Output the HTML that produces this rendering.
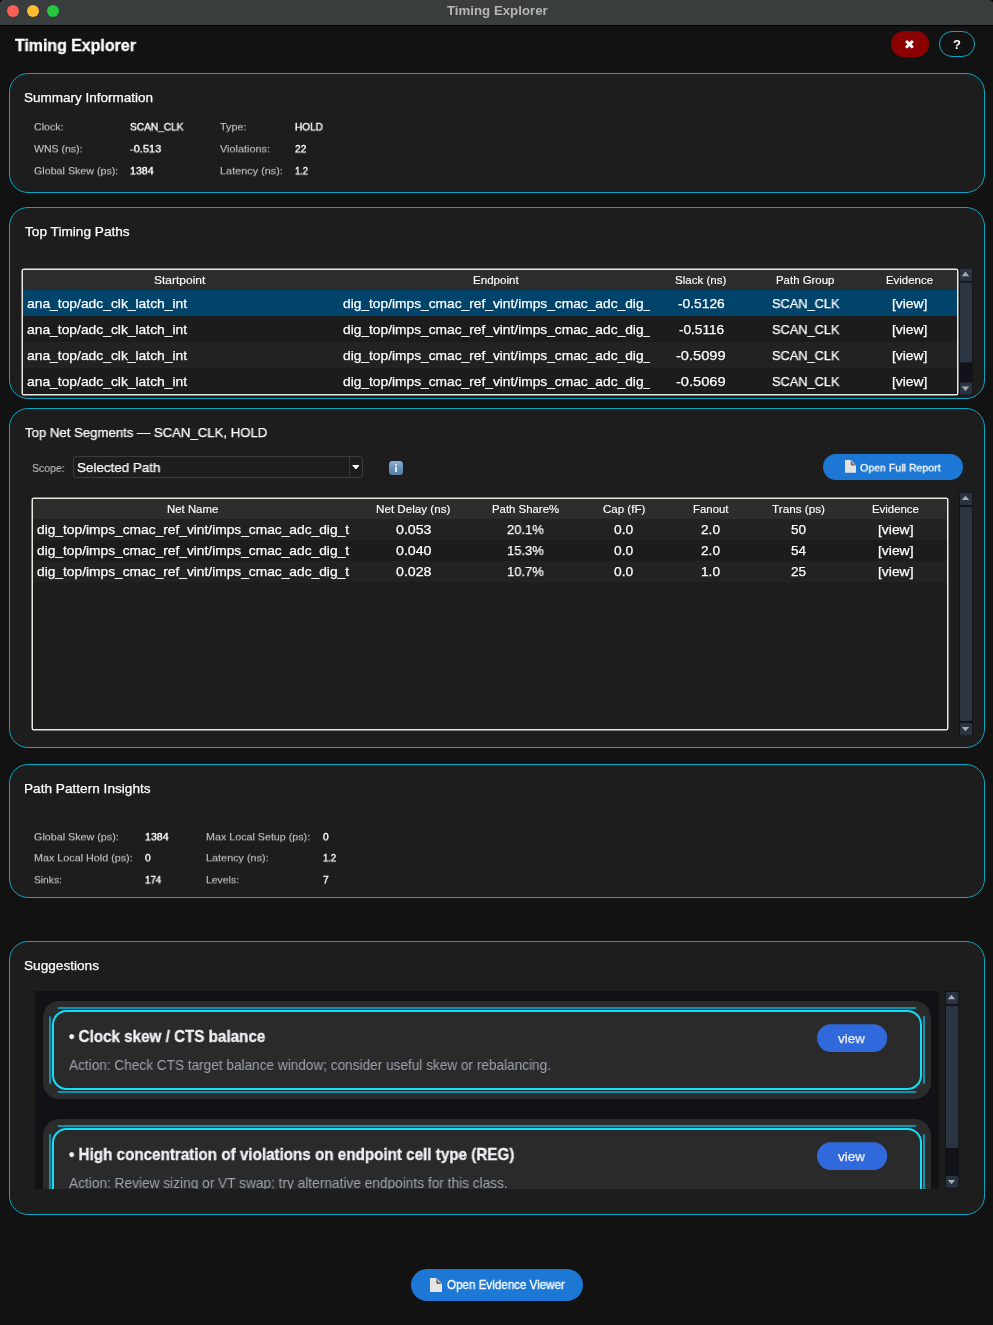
<!DOCTYPE html>
<html><head><meta charset="utf-8"><title>Timing Explorer</title>
<style>
*{box-sizing:border-box;margin:0;padding:0}
html,body{width:993px;height:1325px;overflow:hidden;background:#000}
body{position:relative;font-family:"Liberation Sans",sans-serif;color:#fff}
#win{position:absolute;left:0;top:0;width:993px;height:1325px;background:#121212;border-radius:4px 4px 0 0;overflow:hidden}
.abs{position:absolute}
.t{position:absolute;white-space:nowrap;line-height:1;will-change:transform;transform-origin:0 0}
#titlebar{position:absolute;left:0;top:0;width:993px;height:25px;background:#3a3d3e}
#tline{position:absolute;left:0;top:25px;width:993px;height:1px;background:#000}
.dot{position:absolute;top:4.8px;width:12.3px;height:12.3px;border-radius:50%}
.panel{position:absolute;left:9px;width:976px;background:#1d1d1d;border:1px solid #0aa7c3;border-radius:19px}
.tbl{position:absolute;background:#1d1d1d;overflow:hidden}
.r{position:absolute;left:0;right:0}
.pill{position:absolute;border-radius:16px}
</style></head><body><div id="win">
<div id="titlebar">
 <div class="dot" style="left:6.9px;background:#fe5f57;box-shadow:0 0 0 0.5px #2c3a3a"></div>
 <div class="dot" style="left:26.9px;background:#febc2e;box-shadow:0 0 0 0.5px #2c3240"></div>
 <div class="dot" style="left:46.9px;background:#28c840;box-shadow:0 0 0 0.5px #2c3a3a"></div>
</div>
<div id="tline"></div>
<!-- top-right buttons -->
<div class="pill" style="left:891px;top:31px;width:38px;height:26px;background:#8b0000"></div>
<div class="pill" style="left:939px;top:31px;width:36px;height:26px;border:1px solid #0aa7c3"></div>
<div class="t" style="left:903.8px;top:37.5px;font-size:13px;font-family:'DejaVu Sans',sans-serif;color:#fff">✖</div>

<!-- PANELS -->
<div class="panel" style="top:73px;height:120px"></div>
<div class="panel" style="top:207px;height:192px"></div>
<div class="panel" style="top:408px;height:340px"></div>
<div class="panel" style="top:764px;height:134px"></div>
<div class="panel" style="top:941px;height:274px"></div>

<!-- TABLE 1 -->
<svg class="abs" style="left:20px;top:267px" width="940" height="130" viewBox="20 267 940 130"><rect x="22.25" y="269.25" width="935.5" height="125.5" rx="1.6" fill="#1c1c1c" stroke="#ebe8e2" stroke-width="1.5"/></svg>
<div class="tbl" style="left:23px;top:270px;width:934px;height:124px">
 <div class="r" style="top:0;height:20px;background:#2d2d2d"></div>
 <div class="r" style="top:20px;height:26px;background:#01446b"></div>
 <div class="r" style="top:46px;height:26px;background:#1c1c1c"></div>
 <div class="r" style="top:72px;height:26px;background:#222222"></div>
 <div class="r" style="top:98px;height:26px;background:#1c1c1c"></div>
</div>
<svg class="abs" style="left:959px;top:268.3px" width="14" height="127.4" viewBox="0 0 14 127.4"><rect x="0.2" y="0" width="13.6" height="127.4" fill="#111318"/><rect x="1" y="0.60" width="12.1" height="12.30" rx="0.8" fill="#2a3340"/><rect x="1" y="14.40" width="12.1" height="80.20" rx="0.8" fill="#2b3542"/><rect x="1" y="114.60" width="12.1" height="12.00" rx="0.8" fill="#2a3340"/><path d="M2.70 8.20L6.45 3.60L10.20 8.20Z" fill="#a5acb5"/><path d="M2.70 118.50L6.45 123.10L10.20 118.50Z" fill="#a5acb5"/></svg>

<!-- PANEL 3 widgets -->
<div class="abs" style="left:73px;top:456px;width:290px;height:22px;border:1px solid #3c3c3c;border-radius:3px;background:#1d1d1d"></div>
<div class="abs" style="left:348.5px;top:456px;width:1.8px;height:22px;background:#383838"></div>
<svg class="abs" style="left:351.6px;top:464.7px" width="7.8" height="4.6" viewBox="0 0 7.8 4.6"><path d="M0 0H7.8L3.9 4.6Z" fill="#fff"/></svg>
<div class="abs" style="left:389px;top:461px;width:14px;height:14px;border-radius:3.5px;background:linear-gradient(#8db4d8,#6a94bd 45%,#577fa8);"></div>
<div class="abs" style="left:395.3px;top:464px;width:1.5px;height:1.5px;background:#e6edf5;border-radius:.4px"></div>
<div class="abs" style="left:395.3px;top:466.6px;width:1.5px;height:5.2px;background:#e6edf5;border-radius:.3px"></div>
<div class="pill" style="left:823px;top:454px;width:140px;height:26px;background:#1c78d4;border-radius:13px"></div>
<svg class="abs" style="left:845px;top:460.2px" width="11" height="12.8" viewBox="0 0 12 14"><path d="M0 0H6.3L12 6V14H0Z" fill="#e4e4e4"/><path d="M6.3 0L12 6H7.2Q6.3 6 6.3 5Z" fill="#6a6a6a"/><path d="M6.3 0L12 6L8.4 3.4Z" fill="#f6f6f6"/></svg>

<!-- TABLE 2 -->
<svg class="abs" style="left:30px;top:496px" width="920" height="236" viewBox="30 496 920 236"><rect x="32.25" y="498.25" width="915.5" height="231.5" rx="1.6" fill="#1d1d1d" stroke="#ebe8e2" stroke-width="1.5"/></svg>
<div class="tbl" style="left:33px;top:499px;width:914px;height:230px">
 <div class="r" style="top:0;height:20px;background:#2d2d2d"></div>
 <div class="r" style="top:20px;height:21px;background:#222222"></div>
 <div class="r" style="top:41px;height:21px;background:#1c1c1c"></div>
 <div class="r" style="top:62px;height:21px;background:#222222"></div>
</div>
<svg class="abs" style="left:959px;top:492.0px" width="14" height="244.3" viewBox="0 0 14 244.3"><rect x="0.2" y="0" width="13.6" height="244.3" fill="#111318"/><rect x="1" y="0.80" width="12.1" height="12.10" rx="0.8" fill="#2a3340"/><rect x="1" y="14.90" width="12.1" height="214.00" rx="0.8" fill="#2b3542"/><rect x="1" y="231.00" width="12.1" height="12.40" rx="0.8" fill="#2a3340"/><path d="M2.70 8.10L6.45 3.80L10.20 8.10Z" fill="#a5acb5"/><path d="M2.70 235.00L6.45 239.30L10.20 235.00Z" fill="#a5acb5"/></svg>

<!-- PANEL 5 canvas -->
<div class="abs" id="canvas" style="left:35px;top:991px;width:904px;height:198px;background:#101216;overflow:hidden">
 <svg class="abs" style="left:0;top:0" width="904" height="240" viewBox="0 0 904 240">
 <g>
  <rect x="8" y="10" width="888" height="98" rx="16.5" fill="#2b2b2b"/>
  <g stroke="#1090ac" stroke-width="2" stroke-linecap="round" fill="none">
   <path d="M23.5 17H880.5M23.5 101H880.5M15 26V92M889 26V92"/>
  </g>
  <rect x="18" y="20" width="868" height="78" rx="13.5" fill="#2a2a2a" stroke="#12dff7" stroke-width="2"/>
  <rect x="782" y="33.2" width="70.2" height="27.8" rx="13.9" fill="#2f69db"/>
 </g>
 <g transform="translate(0,118)"><g>
  <rect x="8" y="10" width="888" height="98" rx="16.5" fill="#2b2b2b"/>
  <g stroke="#1090ac" stroke-width="2" stroke-linecap="round" fill="none">
   <path d="M23.5 17H880.5M23.5 101H880.5M15 26V92M889 26V92"/>
  </g>
  <rect x="18" y="20" width="868" height="78" rx="13.5" fill="#2a2a2a" stroke="#12dff7" stroke-width="2"/>
  <rect x="782" y="33.2" width="70.2" height="27.8" rx="13.9" fill="#2f69db"/>
 </g></g>
 </svg>
<div class="t" style="left:34.00px;top:36.60px;font-size:16.4px;color:#f1f1f6;font-weight:bold;-webkit-text-stroke:0.3px #f1f1f6;transform:scaleX(0.9276);">• Clock skew / CTS balance</div>
<div class="t" style="left:33.80px;top:67.10px;font-size:14.2px;color:#9ca3af;transform:scaleX(0.9595);">Action: Check CTS target balance window; consider useful skew or rebalancing.</div>
<div class="t" style="left:803.00px;top:40.70px;font-size:13.5px;color:#f3f4f6;-webkit-text-stroke:0.25px #f3f4f6;transform:scaleX(0.9920);">view</div>
<div class="t" style="left:34.00px;top:154.70px;font-size:16.4px;color:#f1f1f6;font-weight:bold;-webkit-text-stroke:0.3px #f1f1f6;transform:scaleX(0.9274);">• High concentration of violations on endpoint cell type (REG)</div>
<div class="t" style="left:33.80px;top:185.20px;font-size:14.2px;color:#9ca3af;transform:scaleX(0.9647);">Action: Review sizing or VT swap; try alternative endpoints for this class.</div>
<div class="t" style="left:803.00px;top:158.70px;font-size:13.5px;color:#f3f4f6;-webkit-text-stroke:0.25px #f3f4f6;transform:scaleX(0.9920);">view</div>
</div>
<svg class="abs" style="left:945px;top:991.0px" width="14" height="197.8" viewBox="0 0 14 197.8"><rect x="0.2" y="0" width="13.6" height="197.8" fill="#111318"/><rect x="1" y="1.05" width="12.1" height="11.95" rx="0.8" fill="#2a3340"/><rect x="1" y="15.05" width="12.1" height="141.85" rx="0.8" fill="#2b3542"/><rect x="1" y="185.00" width="12.1" height="11.80" rx="0.8" fill="#2a3340"/><path d="M2.70 8.20L6.45 3.80L10.20 8.20Z" fill="#a5acb5"/><path d="M2.70 188.90L6.45 193.20L10.20 188.90Z" fill="#a5acb5"/></svg>

<!-- bottom button -->
<div class="pill" style="left:411px;top:1269px;width:172px;height:32px;background:#1c78d4"></div>
<svg class="abs" style="left:430px;top:1278px" width="12" height="14" viewBox="0 0 12 14"><path d="M0 0H6.3L12 6V14H0Z" fill="#e4e4e4"/><path d="M6.3 0L12 6H7.2Q6.3 6 6.3 5Z" fill="#6a6a6a"/><path d="M6.3 0L12 6L8.4 3.4Z" fill="#f6f6f6"/></svg>

<div class="t" style="left:446.60px;top:3.80px;font-size:13px;color:#b4b6b6;font-weight:bold;transform:scaleX(1.0199);">Timing Explorer</div>
<div class="t" style="left:14.50px;top:36.80px;font-size:16.5px;color:#ffffff;font-weight:bold;-webkit-text-stroke:0.3px #ffffff;transform:scaleX(0.9640);">Timing Explorer</div>
<div class="t" style="left:953.12px;top:38.00px;font-size:13px;color:#ffffff;font-weight:bold;">?</div>
<div class="t" style="left:24.20px;top:90.90px;font-size:13.5px;color:#fff;-webkit-text-stroke:0.25px #fff;">Summary Information</div>
<div class="t" style="left:24.60px;top:224.90px;font-size:13.5px;color:#fff;-webkit-text-stroke:0.25px #fff;transform:scaleX(1.0110);">Top Timing Paths</div>
<div class="t" style="left:24.50px;top:425.80px;font-size:13.5px;color:#fff;-webkit-text-stroke:0.25px #fff;transform:scaleX(0.9760);">Top Net Segments — SCAN_CLK, HOLD</div>
<div class="t" style="left:23.50px;top:781.70px;font-size:13.5px;color:#fff;-webkit-text-stroke:0.25px #fff;transform:scaleX(1.0101);">Path Pattern Insights</div>
<div class="t" style="left:24.20px;top:958.80px;font-size:13.5px;color:#fff;-webkit-text-stroke:0.25px #fff;transform:scaleX(1.0093);">Suggestions</div>
<div class="t" style="left:34.20px;top:123.34px;font-size:10.2px;color:#c6c6c6;-webkit-text-stroke:0.1px #c6c6c6;transform:scale(1.0384,0.920);">Clock:</div>
<div class="t" style="left:130.00px;top:123.34px;font-size:10.2px;color:#ffffff;-webkit-text-stroke:0.35px #ffffff;transform:scale(0.9926,0.920);">SCAN_CLK</div>
<div class="t" style="left:34.20px;top:145.34px;font-size:10.2px;color:#c6c6c6;-webkit-text-stroke:0.1px #c6c6c6;transform:scale(1.0323,0.920);">WNS (ns):</div>
<div class="t" style="left:130.00px;top:145.34px;font-size:10.2px;color:#ffffff;-webkit-text-stroke:0.35px #ffffff;transform:scale(1.0799,0.920);">-0.513</div>
<div class="t" style="left:34.20px;top:167.34px;font-size:10.2px;color:#c6c6c6;-webkit-text-stroke:0.1px #c6c6c6;transform:scale(1.0484,0.920);">Global Skew (ps):</div>
<div class="t" style="left:130.00px;top:167.34px;font-size:10.2px;color:#ffffff;-webkit-text-stroke:0.35px #ffffff;transform:scale(1.0409,0.920);">1384</div>
<div class="t" style="left:220.20px;top:123.34px;font-size:10.2px;color:#c6c6c6;-webkit-text-stroke:0.1px #c6c6c6;transform:scale(1.0633,0.920);">Type:</div>
<div class="t" style="left:295.40px;top:123.34px;font-size:10.2px;color:#ffffff;-webkit-text-stroke:0.35px #ffffff;transform:scale(0.9854,0.920);">HOLD</div>
<div class="t" style="left:220.20px;top:145.34px;font-size:10.2px;color:#c6c6c6;-webkit-text-stroke:0.1px #c6c6c6;transform:scale(1.0656,0.920);">Violations:</div>
<div class="t" style="left:295.40px;top:145.34px;font-size:10.2px;color:#ffffff;-webkit-text-stroke:0.35px #ffffff;transform:scale(0.9961,0.920);">22</div>
<div class="t" style="left:220.20px;top:167.34px;font-size:10.2px;color:#c6c6c6;-webkit-text-stroke:0.1px #c6c6c6;transform:scale(1.0664,0.920);">Latency (ns):</div>
<div class="t" style="left:295.40px;top:167.34px;font-size:10.2px;color:#ffffff;-webkit-text-stroke:0.35px #ffffff;transform:scale(0.9103,0.920);">1.2</div>
<div class="t" style="left:154.35px;top:274.90px;font-size:11.4px;color:#fff;-webkit-text-stroke:0.15px #fff;transform:scaleX(1.0520);">Startpoint</div>
<div class="t" style="left:472.65px;top:274.90px;font-size:11.4px;color:#fff;-webkit-text-stroke:0.15px #fff;transform:scaleX(1.0163);">Endpoint</div>
<div class="t" style="left:675.10px;top:274.90px;font-size:11.4px;color:#fff;-webkit-text-stroke:0.15px #fff;transform:scaleX(1.0150);">Slack (ns)</div>
<div class="t" style="left:776.40px;top:274.90px;font-size:11.4px;color:#fff;-webkit-text-stroke:0.15px #fff;transform:scaleX(1.0023);">Path Group</div>
<div class="t" style="left:886.20px;top:274.90px;font-size:11.4px;color:#fff;-webkit-text-stroke:0.15px #fff;transform:scaleX(1.0030);">Evidence</div>
<div class="t" style="left:27.10px;top:296.90px;font-size:13.5px;color:#fff;-webkit-text-stroke:0.25px #fff;transform:scaleX(1.0255);">ana_top/adc_clk_latch_int</div>
<div class="abs" style="left:342.50px;top:296.90px;width:307.50px;height:18.5px;overflow:hidden"><div class="t" style="left:0;top:0;font-size:13.5px;color:#fff;-webkit-text-stroke:0.25px #fff;transform:scaleX(1.0192);">dig_top/imps_cmac_ref_vint/imps_cmac_adc_dig_</div></div>
<div class="t" style="left:677.70px;top:296.90px;font-size:13.5px;color:#fff;-webkit-text-stroke:0.25px #fff;transform:scaleX(1.0219);">-0.5126</div>
<div class="t" style="left:772.35px;top:296.90px;font-size:13.5px;color:#fff;-webkit-text-stroke:0.25px #fff;transform:scaleX(0.9470);">SCAN_CLK</div>
<div class="t" style="left:892.10px;top:296.90px;font-size:13.5px;color:#fff;-webkit-text-stroke:0.25px #fff;transform:scaleX(1.0256);">[view]</div>
<div class="t" style="left:27.10px;top:322.90px;font-size:13.5px;color:#fff;-webkit-text-stroke:0.25px #fff;transform:scaleX(1.0255);">ana_top/adc_clk_latch_int</div>
<div class="abs" style="left:342.50px;top:322.90px;width:307.50px;height:18.5px;overflow:hidden"><div class="t" style="left:0;top:0;font-size:13.5px;color:#fff;-webkit-text-stroke:0.25px #fff;transform:scaleX(1.0192);">dig_top/imps_cmac_ref_vint/imps_cmac_adc_dig_</div></div>
<div class="t" style="left:678.55px;top:322.90px;font-size:13.5px;color:#fff;-webkit-text-stroke:0.25px #fff;transform:scaleX(1.0068);">-0.5116</div>
<div class="t" style="left:772.35px;top:322.90px;font-size:13.5px;color:#fff;-webkit-text-stroke:0.25px #fff;transform:scaleX(0.9470);">SCAN_CLK</div>
<div class="t" style="left:892.10px;top:322.90px;font-size:13.5px;color:#fff;-webkit-text-stroke:0.25px #fff;transform:scaleX(1.0256);">[view]</div>
<div class="t" style="left:27.10px;top:348.90px;font-size:13.5px;color:#fff;-webkit-text-stroke:0.25px #fff;transform:scaleX(1.0255);">ana_top/adc_clk_latch_int</div>
<div class="abs" style="left:342.50px;top:348.90px;width:307.50px;height:18.5px;overflow:hidden"><div class="t" style="left:0;top:0;font-size:13.5px;color:#fff;-webkit-text-stroke:0.25px #fff;transform:scaleX(1.0192);">dig_top/imps_cmac_ref_vint/imps_cmac_adc_dig_</div></div>
<div class="t" style="left:676.30px;top:348.90px;font-size:13.5px;color:#fff;-webkit-text-stroke:0.25px #fff;transform:scaleX(1.0830);">-0.5099</div>
<div class="t" style="left:772.35px;top:348.90px;font-size:13.5px;color:#fff;-webkit-text-stroke:0.25px #fff;transform:scaleX(0.9470);">SCAN_CLK</div>
<div class="t" style="left:892.10px;top:348.90px;font-size:13.5px;color:#fff;-webkit-text-stroke:0.25px #fff;transform:scaleX(1.0256);">[view]</div>
<div class="t" style="left:27.10px;top:374.90px;font-size:13.5px;color:#fff;-webkit-text-stroke:0.25px #fff;transform:scaleX(1.0255);">ana_top/adc_clk_latch_int</div>
<div class="abs" style="left:342.50px;top:374.90px;width:307.50px;height:18.5px;overflow:hidden"><div class="t" style="left:0;top:0;font-size:13.5px;color:#fff;-webkit-text-stroke:0.25px #fff;transform:scaleX(1.0192);">dig_top/imps_cmac_ref_vint/imps_cmac_adc_dig_</div></div>
<div class="t" style="left:676.30px;top:374.90px;font-size:13.5px;color:#fff;-webkit-text-stroke:0.25px #fff;transform:scaleX(1.0830);">-0.5069</div>
<div class="t" style="left:772.35px;top:374.90px;font-size:13.5px;color:#fff;-webkit-text-stroke:0.25px #fff;transform:scaleX(0.9470);">SCAN_CLK</div>
<div class="t" style="left:892.10px;top:374.90px;font-size:13.5px;color:#fff;-webkit-text-stroke:0.25px #fff;transform:scaleX(1.0256);">[view]</div>
<div class="t" style="left:32.20px;top:463.40px;font-size:11.4px;color:#bdbdbd;-webkit-text-stroke:0.15px #bdbdbd;transform:scaleX(0.9191);">Scope:</div>
<div class="t" style="left:76.50px;top:461.00px;font-size:13.5px;color:#fff;-webkit-text-stroke:0.25px #fff;transform:scaleX(0.9933);">Selected Path</div>
<div class="t" style="left:860.30px;top:462.73px;font-size:10.9px;color:#ffffff;-webkit-text-stroke:0.3px #ffffff;transform:scale(0.9718,0.930);">Open Full Report</div>
<div class="t" style="left:167.25px;top:504.20px;font-size:11.4px;color:#fff;-webkit-text-stroke:0.15px #fff;">Net Name</div>
<div class="t" style="left:376.20px;top:504.20px;font-size:11.4px;color:#fff;-webkit-text-stroke:0.15px #fff;transform:scaleX(1.0220);">Net Delay (ns)</div>
<div class="t" style="left:492.20px;top:504.20px;font-size:11.4px;color:#fff;-webkit-text-stroke:0.15px #fff;">Path Share%</div>
<div class="t" style="left:603.15px;top:504.20px;font-size:11.4px;color:#fff;-webkit-text-stroke:0.15px #fff;transform:scaleX(1.0124);">Cap (fF)</div>
<div class="t" style="left:693.35px;top:504.20px;font-size:11.4px;color:#fff;-webkit-text-stroke:0.15px #fff;">Fanout</div>
<div class="t" style="left:771.80px;top:504.20px;font-size:11.4px;color:#fff;-webkit-text-stroke:0.15px #fff;transform:scaleX(1.0294);">Trans (ps)</div>
<div class="t" style="left:872.30px;top:504.20px;font-size:11.4px;color:#fff;-webkit-text-stroke:0.15px #fff;">Evidence</div>
<div class="abs" style="left:37.20px;top:522.80px;width:312.80px;height:18.5px;overflow:hidden"><div class="t" style="left:0;top:0;font-size:13.5px;color:#fff;-webkit-text-stroke:0.25px #fff;transform:scaleX(1.0192);">dig_top/imps_cmac_ref_vint/imps_cmac_adc_dig_t</div></div>
<div class="t" style="left:396.25px;top:522.80px;font-size:13.5px;color:#fff;-webkit-text-stroke:0.25px #fff;transform:scaleX(1.0504);">0.053</div>
<div class="t" style="left:507.40px;top:522.80px;font-size:13.5px;color:#fff;-webkit-text-stroke:0.25px #fff;transform:scaleX(0.9613);">20.1%</div>
<div class="t" style="left:614.40px;top:522.80px;font-size:13.5px;color:#fff;-webkit-text-stroke:0.25px #fff;transform:scaleX(1.0223);">0.0</div>
<div class="t" style="left:701.30px;top:522.80px;font-size:13.5px;color:#fff;-webkit-text-stroke:0.25px #fff;transform:scaleX(1.0116);">2.0</div>
<div class="t" style="left:790.60px;top:522.80px;font-size:13.5px;color:#fff;-webkit-text-stroke:0.25px #fff;transform:scaleX(0.9979);">50</div>
<div class="t" style="left:877.75px;top:522.80px;font-size:13.5px;color:#fff;-webkit-text-stroke:0.25px #fff;transform:scaleX(1.0285);">[view]</div>
<div class="abs" style="left:37.20px;top:543.80px;width:312.80px;height:18.5px;overflow:hidden"><div class="t" style="left:0;top:0;font-size:13.5px;color:#fff;-webkit-text-stroke:0.25px #fff;transform:scaleX(1.0192);">dig_top/imps_cmac_ref_vint/imps_cmac_adc_dig_t</div></div>
<div class="t" style="left:396.25px;top:543.80px;font-size:13.5px;color:#fff;-webkit-text-stroke:0.25px #fff;transform:scaleX(1.0504);">0.040</div>
<div class="t" style="left:507.40px;top:543.80px;font-size:13.5px;color:#fff;-webkit-text-stroke:0.25px #fff;transform:scaleX(0.9613);">15.3%</div>
<div class="t" style="left:614.40px;top:543.80px;font-size:13.5px;color:#fff;-webkit-text-stroke:0.25px #fff;transform:scaleX(1.0223);">0.0</div>
<div class="t" style="left:701.30px;top:543.80px;font-size:13.5px;color:#fff;-webkit-text-stroke:0.25px #fff;transform:scaleX(1.0116);">2.0</div>
<div class="t" style="left:790.60px;top:543.80px;font-size:13.5px;color:#fff;-webkit-text-stroke:0.25px #fff;transform:scaleX(0.9979);">54</div>
<div class="t" style="left:877.75px;top:543.80px;font-size:13.5px;color:#fff;-webkit-text-stroke:0.25px #fff;transform:scaleX(1.0285);">[view]</div>
<div class="abs" style="left:37.20px;top:564.80px;width:312.80px;height:18.5px;overflow:hidden"><div class="t" style="left:0;top:0;font-size:13.5px;color:#fff;-webkit-text-stroke:0.25px #fff;transform:scaleX(1.0192);">dig_top/imps_cmac_ref_vint/imps_cmac_adc_dig_t</div></div>
<div class="t" style="left:396.25px;top:564.80px;font-size:13.5px;color:#fff;-webkit-text-stroke:0.25px #fff;transform:scaleX(1.0504);">0.028</div>
<div class="t" style="left:507.40px;top:564.80px;font-size:13.5px;color:#fff;-webkit-text-stroke:0.25px #fff;transform:scaleX(0.9613);">10.7%</div>
<div class="t" style="left:614.40px;top:564.80px;font-size:13.5px;color:#fff;-webkit-text-stroke:0.25px #fff;transform:scaleX(1.0223);">0.0</div>
<div class="t" style="left:701.30px;top:564.80px;font-size:13.5px;color:#fff;-webkit-text-stroke:0.25px #fff;transform:scaleX(1.0116);">1.0</div>
<div class="t" style="left:790.60px;top:564.80px;font-size:13.5px;color:#fff;-webkit-text-stroke:0.25px #fff;transform:scaleX(0.9979);">25</div>
<div class="t" style="left:877.75px;top:564.80px;font-size:13.5px;color:#fff;-webkit-text-stroke:0.25px #fff;transform:scaleX(1.0285);">[view]</div>
<div class="t" style="left:34.10px;top:832.54px;font-size:10.2px;color:#c6c6c6;-webkit-text-stroke:0.1px #c6c6c6;transform:scale(1.0534,0.920);">Global Skew (ps):</div>
<div class="t" style="left:145.10px;top:832.54px;font-size:10.2px;color:#ffffff;-webkit-text-stroke:0.35px #ffffff;transform:scale(1.0365,0.920);">1384</div>
<div class="t" style="left:34.10px;top:854.49px;font-size:10.2px;color:#c6c6c6;-webkit-text-stroke:0.1px #c6c6c6;transform:scale(1.0554,0.920);">Max Local Hold (ps):</div>
<div class="t" style="left:145.10px;top:854.49px;font-size:10.2px;color:#ffffff;-webkit-text-stroke:0.35px #ffffff;transform:scale(1.0000,0.920);">0</div>
<div class="t" style="left:34.10px;top:876.44px;font-size:10.2px;color:#c6c6c6;-webkit-text-stroke:0.1px #c6c6c6;transform:scale(1.0054,0.920);">Sinks:</div>
<div class="t" style="left:145.10px;top:876.44px;font-size:10.2px;color:#ffffff;-webkit-text-stroke:0.35px #ffffff;transform:scale(0.9588,0.920);">174</div>
<div class="t" style="left:206.40px;top:832.54px;font-size:10.2px;color:#c6c6c6;-webkit-text-stroke:0.1px #c6c6c6;transform:scale(1.0505,0.920);">Max Local Setup (ps):</div>
<div class="t" style="left:323.30px;top:832.54px;font-size:10.2px;color:#ffffff;-webkit-text-stroke:0.35px #ffffff;transform:scale(1.0000,0.920);">0</div>
<div class="t" style="left:206.40px;top:854.49px;font-size:10.2px;color:#c6c6c6;-webkit-text-stroke:0.1px #c6c6c6;transform:scale(1.0630,0.920);">Latency (ns):</div>
<div class="t" style="left:323.30px;top:854.49px;font-size:10.2px;color:#ffffff;-webkit-text-stroke:0.35px #ffffff;transform:scale(0.9244,0.920);">1.2</div>
<div class="t" style="left:206.40px;top:876.44px;font-size:10.2px;color:#c6c6c6;-webkit-text-stroke:0.1px #c6c6c6;transform:scale(1.0223,0.920);">Levels:</div>
<div class="t" style="left:323.30px;top:876.44px;font-size:10.2px;color:#ffffff;-webkit-text-stroke:0.35px #ffffff;transform:scale(1.0000,0.920);">7</div>
<div class="t" style="left:447.30px;top:1280.20px;font-size:11.9px;color:#ffffff;-webkit-text-stroke:0.3px #ffffff;transform:scaleX(0.9764);">Open Evidence Viewer</div>
</div></body></html>
